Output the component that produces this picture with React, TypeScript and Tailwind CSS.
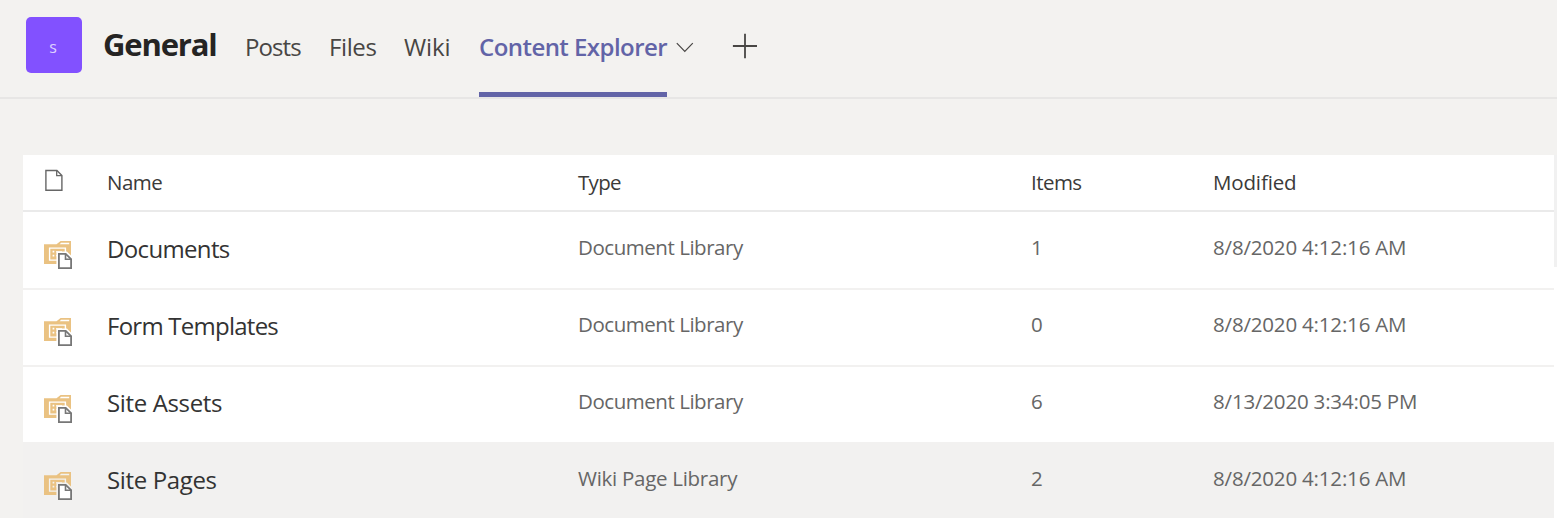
type Library = {
  name: string;
  nameTracking: string;
  type: string;
  typeTracking: string;
  items: number;
  modified: string;
  selected?: boolean;
};

const LIBRARIES: Library[] = [
  { name: 'Documents', nameTracking: 'tracking-[-0.65px]', type: 'Document Library', typeTracking: 'tracking-[-0.46px]', items: 1, modified: '8/8/2020 4:12:16 AM' },
  { name: 'Form Templates', nameTracking: 'tracking-[-0.75px]', type: 'Document Library', typeTracking: 'tracking-[-0.46px]', items: 0, modified: '8/8/2020 4:12:16 AM' },
  { name: 'Site Assets', nameTracking: 'tracking-[-0.36px]', type: 'Document Library', typeTracking: 'tracking-[-0.46px]', items: 6, modified: '8/13/2020 3:34:05 PM' },
  { name: 'Site Pages', nameTracking: 'tracking-[-0.35px]', type: 'Wiki Page Library', typeTracking: 'tracking-[-0.28px]', items: 2, modified: '8/8/2020 4:12:16 AM', selected: true },
];

const COLUMNS = 'grid grid-cols-[84px_471px_453px_182px_1fr]';

function FileIcon() {
  return (
    <svg className="ml-[22px] mt-[14px] h-6 w-5" viewBox="0 0 20 24" fill="none" stroke="#666" strokeWidth="1.4">
      <path d="M.9 1.5h11l5 5v14.8H.9z" />
      <path d="M11.7 1.5v5.2h5.2" strokeWidth="1.3" />
    </svg>
  );
}

function LibraryIcon({ selected }: { selected?: boolean }) {
  const light = selected ? '#f3f2f0' : '#fff';
  return (
    <svg className="ml-[21px] mt-7 h-7 w-7" viewBox="0 0 28 28" fill="none">
      <path d="M0 3.2h12.5L16.6 0H27v23H0z" fill="#eac282" />
      <path d="M15.6 3.3l1.5-1.5h8.1v1.5z" fill={light} />
      <path d="M5.6 7.1h15.8v12H5.6z" stroke={light} strokeWidth="1.4" />
      <path d="M8.6 9.8h1.7v1.7H8.6zM8.6 13.8h1.7v1.7H8.6zM12 10.2h6v1.1h-6zM12 14.2h6v1.1h-6z" fill={light} />
      <path d="M12.4 10.4h10.5l6.1 6V29H12.4z" fill={light} />
      <path d="M14.9 12.9h6.8l5.4 5.3v8.9H14.9z" fill="#fff" stroke="#777" strokeWidth="1.8" />
      <path d="M21.5 12.9v5.4h5.6" stroke="#777" strokeWidth="1.6" />
    </svg>
  );
}

function TeamHeader() {
  return (
    <header className="flex h-[99px] border-b-2 border-[#e7e6e5] pl-[26px] text-2xl leading-[94px] text-[#484644]">
      <div className="mt-[17px] h-14 w-14 shrink-0 rounded-[5px] bg-[#8251ff] pr-0.5 text-center text-[16px] leading-[60px] text-[#ded2ff]">s</div>
      <h1 className="ml-[21px] w-[141px] text-[31px] font-bold leading-[88px] tracking-[-1.15px] text-[#252423]">General</h1>
      <nav className="flex">
        <a className="ml-px w-[84px] font-[370] tracking-[-0.9px]">Posts</a>
        <a className="w-[75px] font-[370] tracking-[-0.4px]">Files</a>
        <a className="w-[75px] font-[370] tracking-[-0.1px]">Wiki</a>
        <a className="h-[97px] w-[188px] whitespace-nowrap border-b-[5px] border-[#6264a7] font-semibold tracking-[-0.55px] text-[#6264a7]">Content Explorer</a>
      </nav>
      <svg className="ml-[9px] mt-[42px] h-[11px] w-[18px]" viewBox="0 0 18 11" fill="none" stroke="#484644" strokeWidth="1.2">
        <path d="M.8 1.2l8 8.2 8-8.2" />
      </svg>
      <svg className="ml-[38px] mt-[33px] h-[26px] w-[26px]" viewBox="0 0 26 26" fill="none" stroke="#484644" strokeWidth="1.8">
        <path d="M13 .8v24.4M.9 13H25" />
      </svg>
    </header>
  );
}

export default function App() {
  return (
    <div className="h-[518px] w-[1557px] overflow-hidden bg-[#f3f2f0] font-['Open_Sans','Noto_Sans',sans-serif]">
      <TeamHeader />
      <main className="flex pt-14">
        <section className="ml-[23px] w-[1531px] bg-white text-[20.5px] font-[370]">
          <div className="pb-px">
            <div className={`${COLUMNS} h-[57px] border-b-2 border-[#eaeaea] leading-[54px] text-[#3b3a39]`}>
              <FileIcon />
              <span className="tracking-[-0.5px]">Name</span>
              <span className="tracking-[-0.7px]">Type</span>
              <span className="tracking-[-0.55px]">Items</span>
              <span className="tracking-[-0.15px]">Modified</span>
            </div>
          </div>
          {LIBRARIES.map((lib) => (
            <div
              key={lib.name}
              className={`${COLUMNS} h-[77px] border-b-2 border-[#f2f1f0] leading-[68px] text-[#666] ${lib.selected ? 'bg-[#f2f1f0]' : ''}`}
            >
              <LibraryIcon selected={lib.selected} />
              <span className={`text-2xl leading-[72px] text-[#333] ${lib.nameTracking}`}>{lib.name}</span>
              <span className={lib.typeTracking}>{lib.type}</span>
              <span>{lib.items}</span>
              <span className="tracking-[-0.18px]">{lib.modified}</span>
            </div>
          ))}
        </section>
        <div className="w-[3px] bg-white">
          <div className="h-28 bg-[#f1f1f1]" />
        </div>
      </main>
    </div>
  );
}
